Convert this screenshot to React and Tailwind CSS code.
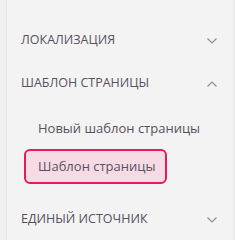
import React from "react";

const Chevron = ({ up }) => (
  <svg width="12" height="8" viewBox="0 0 12 8" fill="none" className="text-[#8a8a9a]">
    <path
      d={up ? "M1.5 6.5 L6 2 L10.5 6.5" : "M1.5 1.5 L6 6 L10.5 1.5"}
      stroke="currentColor"
      strokeWidth="1.1"
    />
  </svg>
);

const Section = ({ title, open }) => (
  <div className="flex items-center justify-between h-[43px] pl-[21px] pr-[15px]">
    <span className="text-[12.5px] uppercase whitespace-nowrap text-[#56515f]">{title}</span>
    <Chevron up={open} />
  </div>
);

export default function App() {
  return (
    <div
      className="flex w-[235px] h-[240px] bg-[#f3f3f3]"
      style={{ fontFamily: '"Open Sans", "Noto Sans", sans-serif' }}
    >
      <div className="w-[7px] bg-[#efefef] border-r border-[#e8e8e8]" />
      <div className="flex-1 flex flex-col pt-[19px]">
        <div className="-ml-[7px]">
          <Section title="Локализация" />
          <Section title="Шаблон страницы" open />
        </div>
        <div className="flex flex-col pl-[17px] pt-[5px]">
          <div className="h-[38px] flex items-center pl-[14px] text-[13px] whitespace-nowrap text-[#56515f]">
            Новый шаблон страницы
          </div>
          <div className="mt-[1px] w-[143px] h-[35px] flex items-center pl-[12px] text-[13px] whitespace-nowrap text-[#56515f] bg-[#f6dbe5] border-2 border-[#e8195a] rounded-[6px]">
            Шаблон страницы
          </div>
        </div>
        <div className="-ml-[7px] mt-[14px]">
          <Section title="Единый источник" />
        </div>
      </div>
      <div className="w-[2px] bg-[#e9e9e9]" />
    </div>
  );
}
